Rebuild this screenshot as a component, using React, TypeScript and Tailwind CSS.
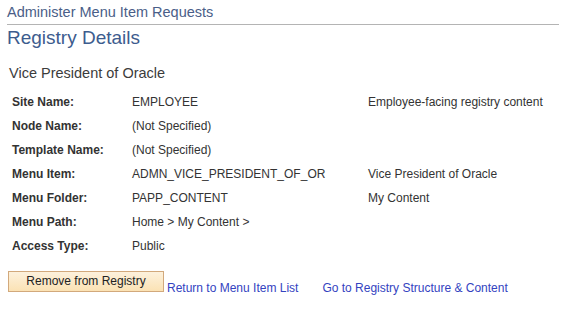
import React from "react";

const rows: [string, string, string][] = [
  ["Site Name:", "EMPLOYEE", "Employee-facing registry content"],
  ["Node Name:", "(Not Specified)", ""],
  ["Template Name:", "(Not Specified)", ""],
  ["Menu Item:", "ADMN_VICE_PRESIDENT_OF_OR", "Vice President of Oracle"],
  ["Menu Folder:", "PAPP_CONTENT", "My Content"],
  ["Menu Path:", "Home > My Content >", ""],
  ["Access Type:", "Public", ""],
];

export default function App() {
  return (
    <div
      className="w-[585px] h-[315px] bg-white overflow-hidden"
      style={{ fontFamily: '"Liberation Sans", Arial, sans-serif' }}
    >
      <div className="pl-[7px] pt-[4px]">
        <div className="w-[552px] border-b border-[#b4b4b4] pb-[4px] text-[14.5px] leading-[16px] text-[#4a5e88]">
          Administer Menu Item Requests
        </div>
        <div className="text-[19px] leading-[22px] text-[#3d5c8e] mt-[2px]">
          Registry Details
        </div>
        <div className="mt-[16px] pl-[2px] text-[14.5px] leading-[16px] text-[#3c3c3c]">
          Vice President of Oracle
        </div>
        <div className="mt-[9px] pl-[5px] text-[12px] text-[#333333]">
          {rows.map(([a, b, c]) => (
            <div key={a} className="flex h-[24px] items-center">
              <div className="w-[120px] font-bold">{a}</div>
              <div className="w-[236px]">{b}</div>
              <div>{c}</div>
            </div>
          ))}
        </div>
        <div className="mt-[13px] flex items-end">
          <button className="ml-[1px] w-[156px] h-[21px] border border-[#d2a97c] bg-gradient-to-b from-[#fdf1dc] to-[#fbe2b4] text-[12px] text-[#222222] leading-[19px] text-center">
            Remove from Registry
          </button>
          <a className="ml-[3px] text-[12px] text-[#3443bf] leading-[14px] mb-[-3px]">
            Return to Menu Item List
          </a>
          <a className="ml-[24px] text-[12px] text-[#3443bf] leading-[14px] mb-[-3px]">
            Go to Registry Structure &amp; Content
          </a>
        </div>
      </div>
    </div>
  );
}
